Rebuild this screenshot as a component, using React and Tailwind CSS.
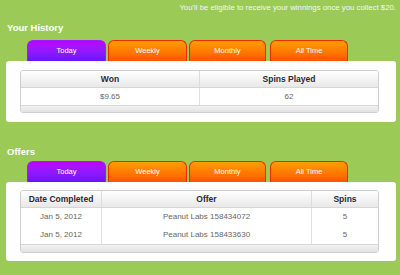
import React from "react";

const tabs = [
  { label: "Today", w: "w-[79px]", active: true },
  { label: "Weekly", w: "w-[79px]" },
  { label: "Monthly", w: "w-[77px]" },
  { label: "All Time", w: "w-[78px]" },
];

function Tabs() {
  return (
    <div className="flex h-[21px] pl-[27px]">
      {tabs.map((t, i) => (
        <div
          key={t.label}
          className={`${t.w} ${i === 3 ? "ml-[4px]" : i > 0 ? "ml-[2px]" : ""} flex items-center justify-center rounded-t-[6px] border border-b-0 text-[7.5px] text-white ${
            t.active
              ? "border-[#9a1cff] bg-gradient-to-b from-[#bb00ff] to-[#6a12ff]"
              : "border-[#ee2a00] bg-gradient-to-b from-[#ff9d00] to-[#ff5400]"
          }`}
        >
          {t.label}
        </div>
      ))}
    </div>
  );
}

export default function App() {
  return (
    <div
      className="w-[400px] h-[275px] overflow-hidden bg-[#9bcb56]"
      style={{ fontFamily: '"Liberation Sans", Arial, sans-serif' }}
    >
      <div className="h-[15px] pt-[1px] flex items-center justify-end pr-[4px] text-[7.8px] text-[#f4f8ee]">
        You'll be eligible to receive your winnings once you collect $20.
      </div>

      <div className="h-[25px] pt-[7px] pl-[7px] text-[9.5px] leading-[11px] font-bold text-white">
        Your History
      </div>
      <Tabs />
      <div className="ml-[6px] w-[390px] bg-white rounded-[3px] pt-[9px] pb-[9px] pl-[14px]">
        <div className="w-[359px] border border-[#cfcfcf] rounded-[3px] overflow-hidden">
          <div className="flex h-[17px] bg-gradient-to-b from-[#ffffff] to-[#e8e8e8] border-b border-[#d6d6d6] text-[8.5px] font-bold text-[#2a2a35]">
            <div className="w-[179px] flex items-center justify-center border-r border-[#dcdcdc]">Won</div>
            <div className="flex-1 flex items-center justify-center">Spins Played</div>
          </div>
          <div className="flex h-[17px] text-[8px] text-[#666]">
            <div className="w-[179px] flex items-center justify-center border-r border-[#e0e0e0]">$9.65</div>
            <div className="flex-1 flex items-center justify-center">62</div>
          </div>
          <div className="h-[7px] border-t border-[#d6d6d6] bg-gradient-to-b from-[#f2f2f2] to-[#e2e2e2]"></div>
        </div>
      </div>

      <div className="h-[39px] pt-[24px] pl-[7px] text-[9.5px] leading-[11px] font-bold text-white">
        Offers
      </div>
      <Tabs />
      <div className="ml-[6px] w-[390px] bg-white rounded-[3px] pt-[8px] pb-[8px] pl-[14px]">
        <div className="w-[359px] border border-[#cfcfcf] rounded-[3px] overflow-hidden">
          <div className="flex h-[17px] bg-gradient-to-b from-[#ffffff] to-[#e8e8e8] border-b border-[#d6d6d6] text-[8.5px] font-bold text-[#2a2a35]">
            <div className="w-[81px] flex items-center justify-center border-r border-[#dcdcdc]">Date Completed</div>
            <div className="w-[210px] flex items-center justify-center border-r border-[#dcdcdc]">Offer</div>
            <div className="flex-1 flex items-center justify-center">Spins</div>
          </div>
          {["158434072", "158433630"].map((n) => (
            <div key={n} className="flex h-[18px] text-[8px] text-[#666]">
              <div className="w-[81px] flex items-center justify-center border-r border-[#e0e0e0]">Jan 5, 2012</div>
              <div className="w-[210px] flex items-center justify-center border-r border-[#e0e0e0]">Peanut Labs {n}</div>
              <div className="flex-1 flex items-center justify-center">5</div>
            </div>
          ))}
          <div className="h-[8px] border-t border-[#d6d6d6] bg-gradient-to-b from-[#f2f2f2] to-[#e2e2e2]"></div>
        </div>
      </div>
    </div>
  );
}
